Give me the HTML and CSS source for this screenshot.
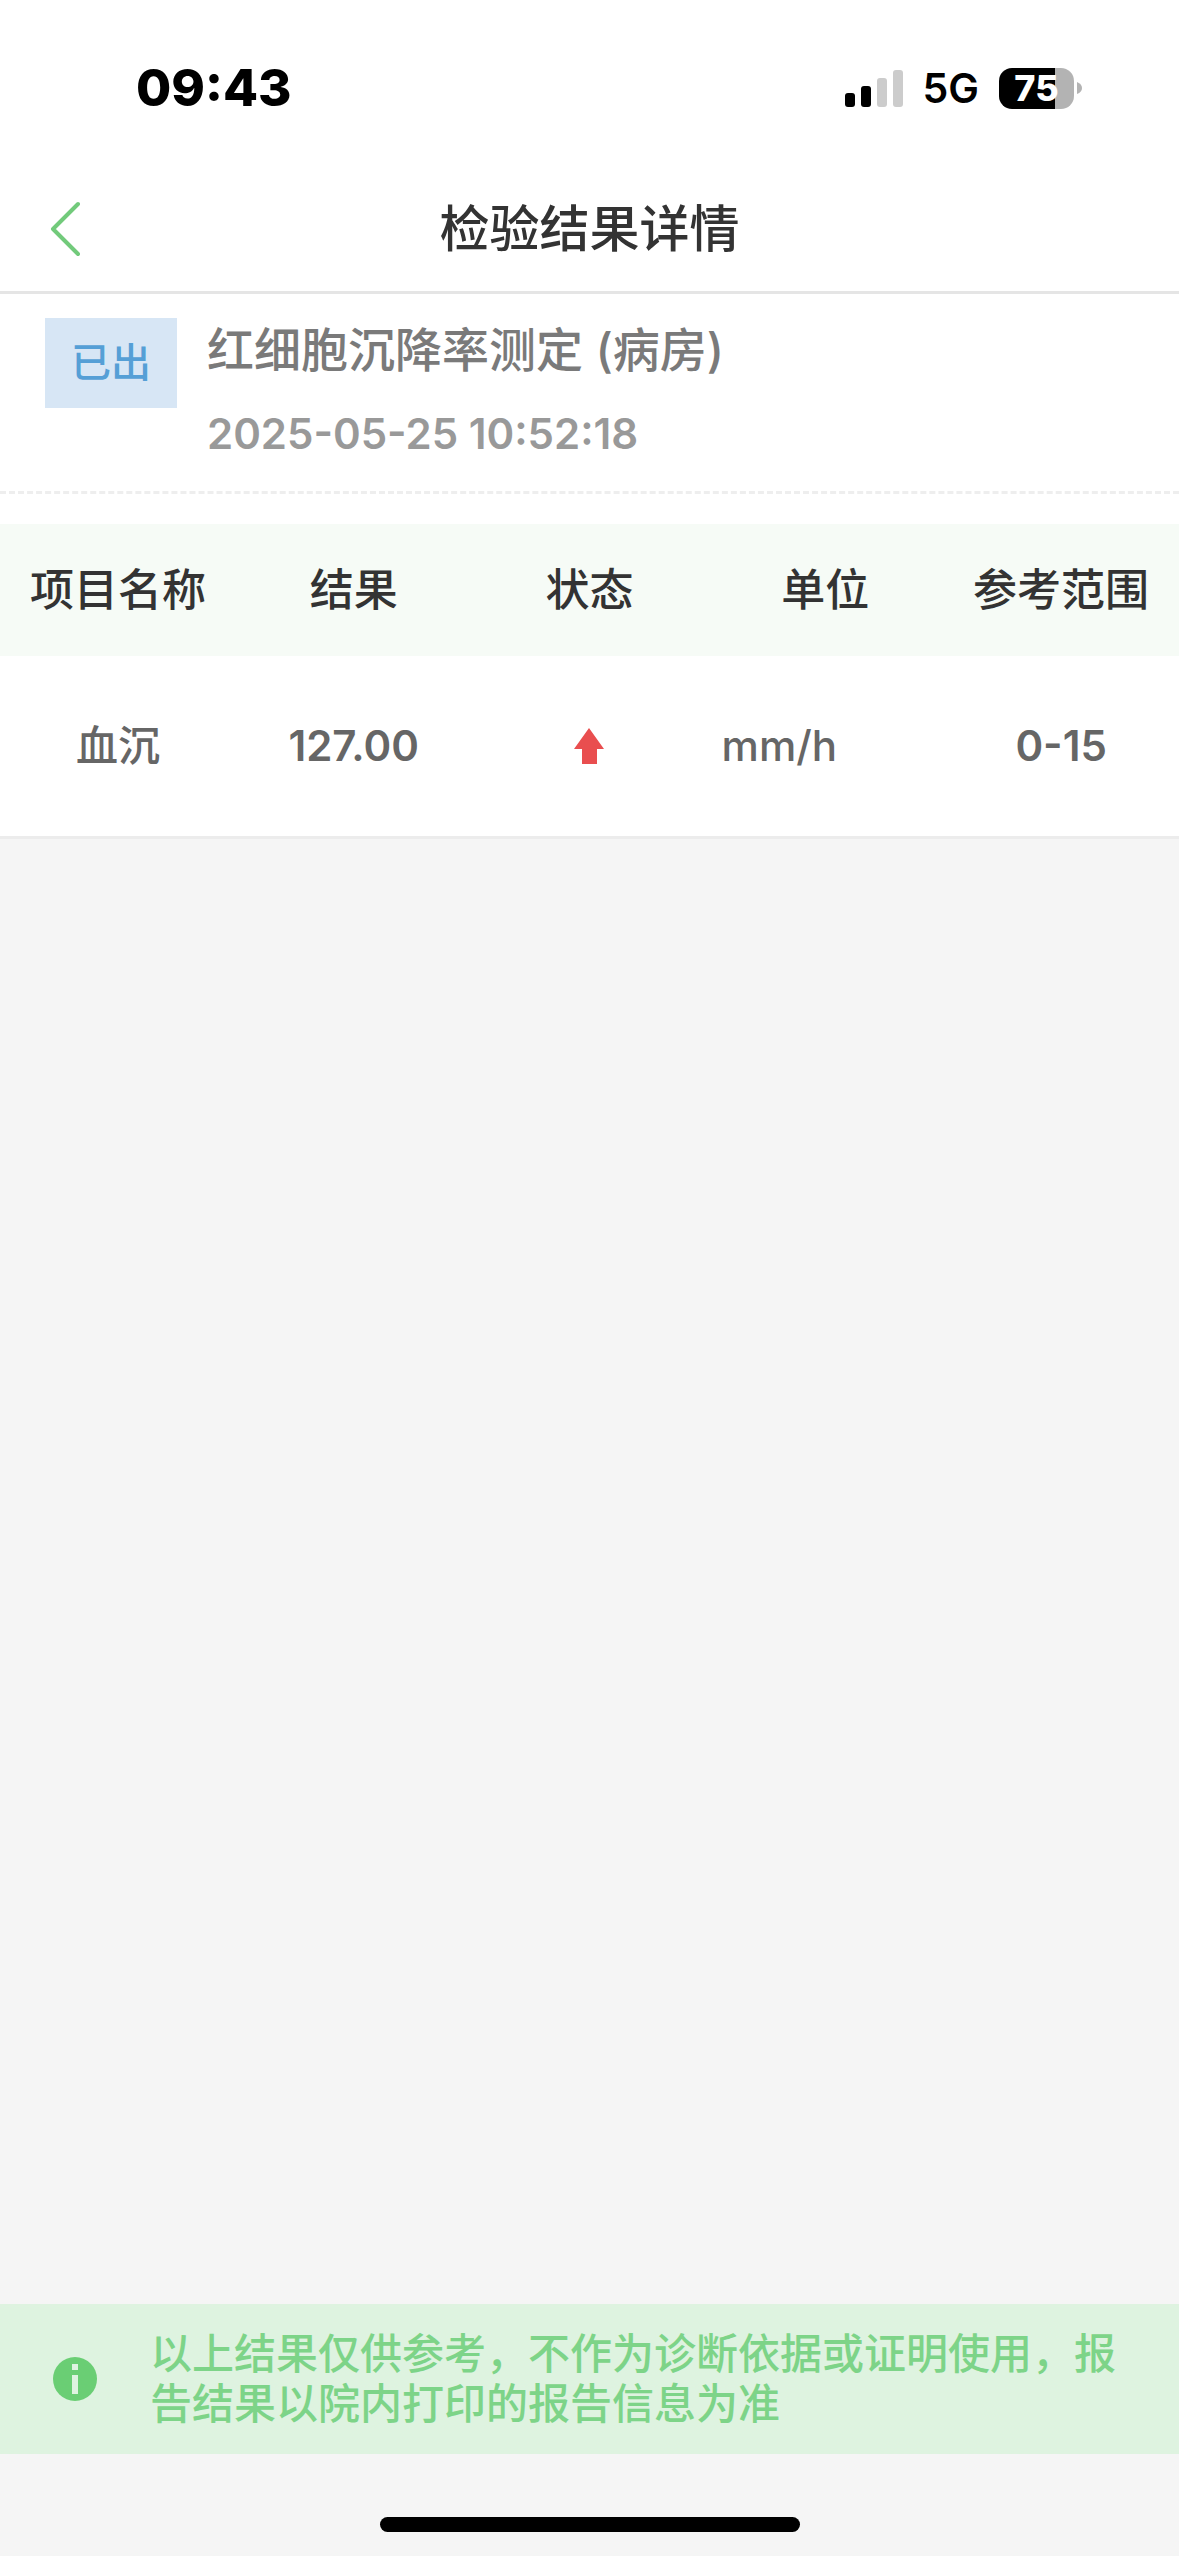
FILE: index.html
```html
<!DOCTYPE html>
<html lang="zh-CN">
<head>
<meta charset="utf-8">
<meta name="viewport" content="width=device-width">
<title>检验结果详情</title>
<link rel="stylesheet" href="styles.css">
</head>
<body>
<div class="status-bar">
  <span class="time">09:43</span>
  <div class="indicators">
    <svg class="signal" viewBox="0 0 58 37" aria-hidden="true">
      <rect x="0" y="23" width="10" height="14" rx="3"/>
      <rect x="16" y="16" width="10" height="21" rx="3"/>
      <rect class="dim" x="32" y="8" width="10" height="29" rx="3"/>
      <rect class="dim" x="48" y="0" width="10" height="37" rx="3"/>
    </svg>
    <span class="network">5G</span>
    <div class="battery">
      <span class="battery-level">75</span>
      <svg class="battery-tip" viewBox="0 0 5 12" aria-hidden="true"><path d="M0 0Q5 2 5 6T0 12Z"/></svg>
    </div>
  </div>
</div>
<header class="nav">
  <button class="back" type="button" aria-label="返回">
    <svg viewBox="0 0 30 56" aria-hidden="true"><path d="M28 3L3 28L28 53"/></svg>
  </button>
  <h1 class="title">检验结果详情</h1>
</header>
<main class="report">
  <section class="summary">
    <span class="badge">已出</span>
    <div class="summary-text">
      <h2 class="name">红细胞沉降率测定 (病房)</h2>
      <time class="date" datetime="2025-05-25T10:52:18">2025-05-25 10:52:18</time>
    </div>
  </section>
  <table class="results">
    <thead>
      <tr><th>项目名称</th><th>结果</th><th>状态</th><th>单位</th><th>参考范围</th></tr>
    </thead>
    <tbody>
      <tr>
        <td>血沉</td>
        <td class="value">127.00</td>
        <td><svg class="arrow" viewBox="0 0 30 36" role="img" aria-label="偏高"><path d="M15 0L30 21H23V36H8V21H0Z"/></svg></td>
        <td class="unit">mm/h</td>
        <td class="value">0-15</td>
      </tr>
    </tbody>
  </table>
</main>
<footer class="footer">
  <div class="notice">
    <svg class="info" viewBox="0 0 44 44" aria-hidden="true">
      <circle cx="22" cy="22" r="22"/>
      <path d="M19 7h6v6h-6zM19 18h6v19h-6z"/>
    </svg>
    <p class="notice-text">以上结果仅供参考，不作为诊断依据或证明使用，报告结果以院内打印的报告信息为准</p>
  </div>
  <div class="home-indicator"></div>
</footer>
</body>
</html>
```
FILE: styles.css
```css
* {
  box-sizing: border-box;
}

body {
  margin: 0;
  min-height: 100vh;
  display: flex;
  flex-direction: column;
  background: #f5f5f5;
  color: #333;
  font-family: Inter, "Noto Sans CJK SC", sans-serif;
  font-size: 42px;
  font-weight: 500;
  line-height: 60px;
}

h1,
h2,
p {
  margin: 0;
  font-weight: 500;
}

.status-bar {
  display: flex;
  align-items: center;
  justify-content: space-between;
  height: 176px;
  padding: 0 97px 0 136px;
  background: #fff;
  color: #000;
}

.time {
  font-size: 51px;
  font-weight: 800;
}

.indicators {
  display: flex;
  align-items: center;
  gap: 20px;
}

.signal {
  width: 58px;
  height: 37px;
}

.dim {
  fill: #ccc;
}

.network {
  font-size: 41px;
  font-weight: 600;
}

.battery {
  display: flex;
  align-items: center;
  gap: 3px;
}

.battery-level {
  width: 75px;
  border-radius: 13px;
  background: linear-gradient(to right, #000 75%, #b3b3b3 75%);
  color: #fff;
  font-size: 36px;
  font-weight: 800;
  line-height: 41px;
  text-align: center;
}

.battery-tip {
  width: 5px;
  height: 12px;
  fill: #b3b3b3;
}

.nav {
  display: grid;
  grid-template-columns: 80px 1fr 80px;
  align-items: center;
  height: 118px;
  padding: 0 50px 10px;
  border-bottom: 3px solid #e5e5e5;
  background: #fff;
}

.back {
  display: flex;
  padding: 0;
  border: 0;
  background: none;
}

.back svg {
  width: 30px;
  height: 56px;
  fill: none;
  stroke: #72ca7b;
  stroke-width: 4;
  stroke-linecap: round;
  stroke-linejoin: round;
}

.title {
  font-size: 50px;
  line-height: 72px;
  text-align: center;
}

.report {
  background: #fff;
}

.summary {
  display: flex;
  align-items: flex-start;
  gap: 30px;
  padding: 24px 45px 27px;
  border-bottom: 3px dashed #eee;
}

.badge {
  padding: 0 26px;
  background: #d7e6f5;
  color: #559fd6;
  font-size: 40px;
  line-height: 90px;
}

.name {
  color: #7a7a7a;
  font-size: 47px;
  line-height: 64px;
}

.date {
  display: block;
  margin-top: 22px;
  color: #999;
  font-weight: 600;
}

.results {
  width: 100%;
  margin-top: 30px;
  border-bottom: 3px solid #ececec;
  border-collapse: separate;
  border-spacing: 0;
  table-layout: fixed;
}

.results th {
  height: 132px;
  padding: 0;
  background: #f6fbf6;
  font-size: 44px;
  font-weight: 500;
}

.results td {
  height: 180px;
  padding: 0;
  color: #666;
  text-align: center;
}

.results .value {
  font-weight: 600;
}

.results .unit {
  padding-right: 92px;
}

.arrow {
  display: block;
  width: 30px;
  height: 36px;
  margin: 0 auto;
  fill: #e94e4f;
}

.footer {
  margin-top: auto;
}

.notice {
  display: flex;
  align-items: center;
  gap: 53px;
  padding: 25px 53px;
  background: #def3e0;
  color: #7dd488;
}

.info {
  flex: none;
  width: 44px;
  height: 44px;
  fill: #6ace74;
}

.info path {
  fill: #def3e0;
}

.notice-text {
  line-height: 50px;
}

.home-indicator {
  width: 420px;
  height: 15px;
  margin: 63px auto 24px;
  border-radius: 8px;
  background: #000;
}
```
